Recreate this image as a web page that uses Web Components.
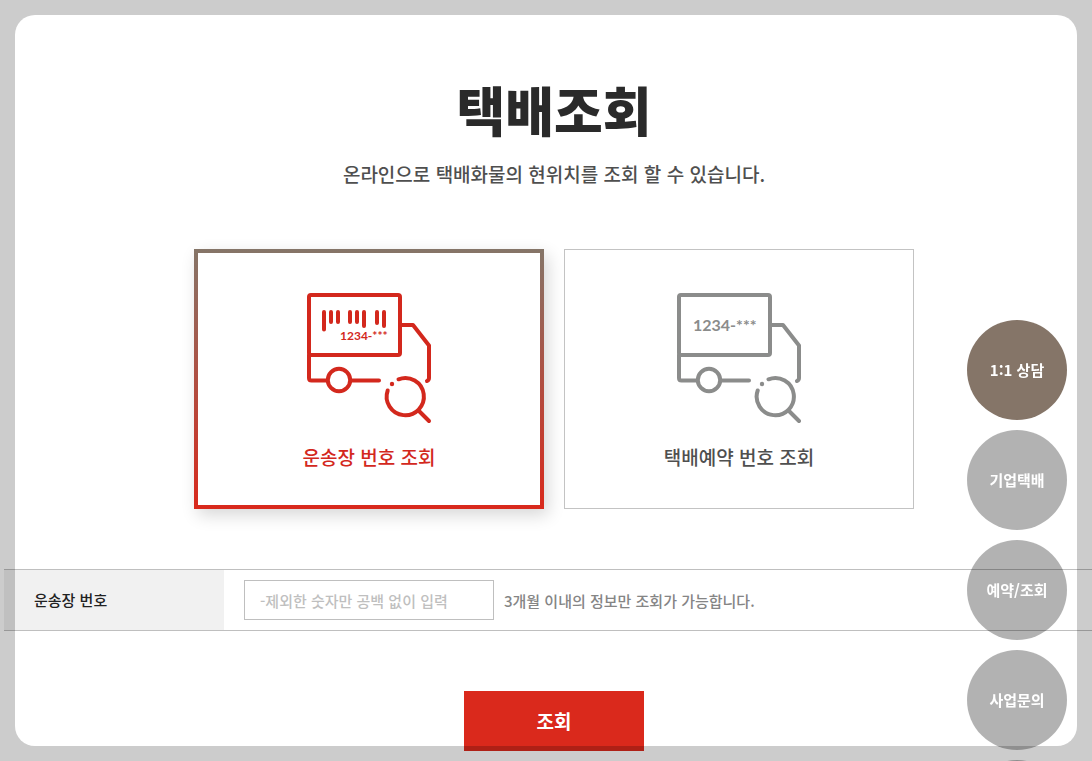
<!DOCTYPE html>
<html lang="ko">
<head>
<meta charset="utf-8">
<meta name="viewport" content="width=device-width, initial-scale=1">
<title>택배조회</title>
<style>
  html, body { margin: 0; background: #fff; }
  body { font-family: "Noto Sans CJK KR", "Noto Sans", sans-serif; font-weight: 500; color: #4f4f4f; overflow: hidden; }
</style>
</head>
<body>
<parcel-page>
  <page-heading>
    <span slot="title">택배조회</span>
    온라인으로 택배화물의 현위치를 조회 할 수 있습니다.
  </page-heading>
  <card-group>
    <lookup-card selected icon="barcode">운송장 번호 조회</lookup-card>
    <lookup-card icon="plain">택배예약 번호 조회</lookup-card>
  </card-group>
  <lookup-form></lookup-form>
</parcel-page>
<quick-menu>
  <quick-link tone="brown">1:1 상담</quick-link>
  <quick-link>기업택배</quick-link>
  <quick-link>예약/조회</quick-link>
  <quick-link>사업문의</quick-link>
  <quick-link></quick-link>
</quick-menu>
<dim-frame></dim-frame>

<script>
  const define = (name, html, setup) => {
    const template = document.createElement('template');
    template.innerHTML = html;
    customElements.define(name, class extends HTMLElement {
      constructor() {
        super();
        this.attachShadow({ mode: 'open' }).append(template.content.cloneNode(true));
      }
      connectedCallback() { if (setup) setup(this, this.shadowRoot); }
    });
  };

  define('parcel-page', `
    <style>
      :host { display: block; margin: 0 -12px 0 4px; padding-top: 79px; }
      main { display: flex; flex-direction: column; gap: 60px; }
    </style>
    <main><slot></slot></main>`);

  define('page-heading', `
    <style>
      :host { display: block; text-align: center; }
      h1 { margin: 0 0 20px; font-size: 53px; line-height: 60px; font-weight: 900; color: #2a2a2a; }
      p { margin: 0; font-size: 19px; line-height: 30px; }
    </style>
    <h1><slot name="title"></slot></h1>
    <p><slot></slot></p>`);

  define('card-group', `
    <style>
      :host { display: flex; justify-content: center; gap: 20px; }
    </style>
    <slot></slot>`);

  define('lookup-card', `
    <style>
      :host { display: block; flex: 0 1 350px; color: #8b8c8b; }
      :host([selected]) { color: #d3281d; }
      button {
        display: flex; flex-direction: column; align-items: center; gap: 16px;
        box-sizing: border-box; width: 100%; margin: 0; padding: 40px 0 36px;
        border: 1px solid #c3c3c3; background: #fff; color: inherit; font: inherit; cursor: pointer;
      }
      :host([selected]) button {
        padding: 37px 0 33px; border: 4px solid;
        border-image: linear-gradient(#857568, #d9291c) 4;
        box-shadow: 4px 6px 16px rgba(0, 0, 0, .16);
      }
      svg { display: block; width: 130px; height: 136px; }
      .line { fill: none; stroke: currentColor; stroke-width: 4; stroke-linecap: round; stroke-linejoin: round; }
      text { fill: currentColor; font-family: Lato, sans-serif; font-weight: 700; }
      .label { font-size: 19px; line-height: 30px; color: #4f4f4f; }
      :host([selected]) .label { color: #d3281d; }
    </style>
    <button type="button">
      <svg viewBox="0 0 130 136" aria-hidden="true">
        <g class="line">
          <rect x="5" y="5" width="91" height="60" rx="2"/>
          <path d="M5 65v23q0 2.500 2.500 2.500H23M48 90.500H75M97 35h12l16 20.500V88q0 2-2 3"/>
          <circle cx="35" cy="90" r="11.200"/>
          <path d="M94.500 89.300A18.600 18.600 0 1 1 83.700 100.500M115 121l10 10"/>
        </g>
        <circle cx="88" cy="94" r="2.200" fill="currentColor"/>
        <path class="line bars" d="M20 22v17.500M27 22v10M34 22v10M46 22v10M53 22v10M60 22v14M73 22v11M80 22v14"/>
        <text x="36" y="50" font-size="12">1234-***</text>
      </svg>
      <span class="label"><slot></slot></span>
    </button>`, (host, root) => {
      root.querySelector('button').setAttribute('aria-pressed', host.hasAttribute('selected'));
      if (host.getAttribute('icon') === 'plain') {
        root.querySelector('.bars')?.remove();
        const code = root.querySelector('text');
        code.setAttribute('x', 19);
        code.setAttribute('y', 41);
        code.setAttribute('font-size', 16);
      }
    });

  define('lookup-form', `
    <style>
      :host { display: block; }
      form { display: flex; flex-direction: column; align-items: center; gap: 60px; margin: 0; }
      .row {
        display: flex; align-self: stretch; height: 60px;
        border: solid #bfbfbf; border-width: 1px 0; font-size: 15px;
      }
      label { box-sizing: border-box; width: 220px; padding-left: 30px; line-height: 60px; background: #f1f1f1; color: #222; }
      .field { display: flex; flex: 1; align-items: center; gap: 10px; padding-left: 20px; }
      input {
        box-sizing: border-box; width: 250px; height: 40px; margin: 0; padding: 0 15px;
        border: 1px solid #bfbfbf; border-radius: 0; background: #fff; font: inherit; color: #222;
      }
      input::placeholder { color: #bfbfbf; opacity: 1; }
      .hint { color: #858585; }
      button {
        width: 180px; height: 60px; margin: 0; padding: 0 0 2px; border: 0; background: #da291c;
        color: #fff; font: inherit; font-size: 19px; font-weight: 700; cursor: pointer;
      }
    </style>
    <form>
      <div class="row">
        <label for="number">운송장 번호</label>
        <div class="field">
          <input id="number" type="text" inputmode="numeric" placeholder="-제외한 숫자만 공백 없이 입력" aria-describedby="hint">
          <span class="hint" id="hint">3개월 이내의 정보만 조회가 가능합니다.</span>
        </div>
      </div>
      <button type="button">조회</button>
    </form>`);

  define('quick-menu', `
    <style>
      :host { position: fixed; z-index: 1; top: 320px; right: 25px; }
      nav { display: flex; flex-direction: column; gap: 10px; }
    </style>
    <nav><slot></slot></nav>`);

  define('quick-link', `
    <style>
      :host { display: block; }
      a {
        display: flex; align-items: center; justify-content: center;
        box-sizing: border-box; width: 100px; height: 100px; padding-bottom: 2px;
        border-radius: 50%; background: rgba(0, 0, 0, .3);
        color: #fff; font-size: 15px; font-weight: 700; text-decoration: none;
      }
      :host([tone="brown"]) a { background: #857568; }
    </style>
    <a href="#"><slot></slot></a>`);

  define('dim-frame', `
    <style>
      :host {
        position: fixed; z-index: 2; inset: 15px; border-radius: 20px;
        box-shadow: 0 0 0 40px rgba(0, 0, 0, .2); pointer-events: none;
      }
    </style>`);
</script>
</body>
</html>
